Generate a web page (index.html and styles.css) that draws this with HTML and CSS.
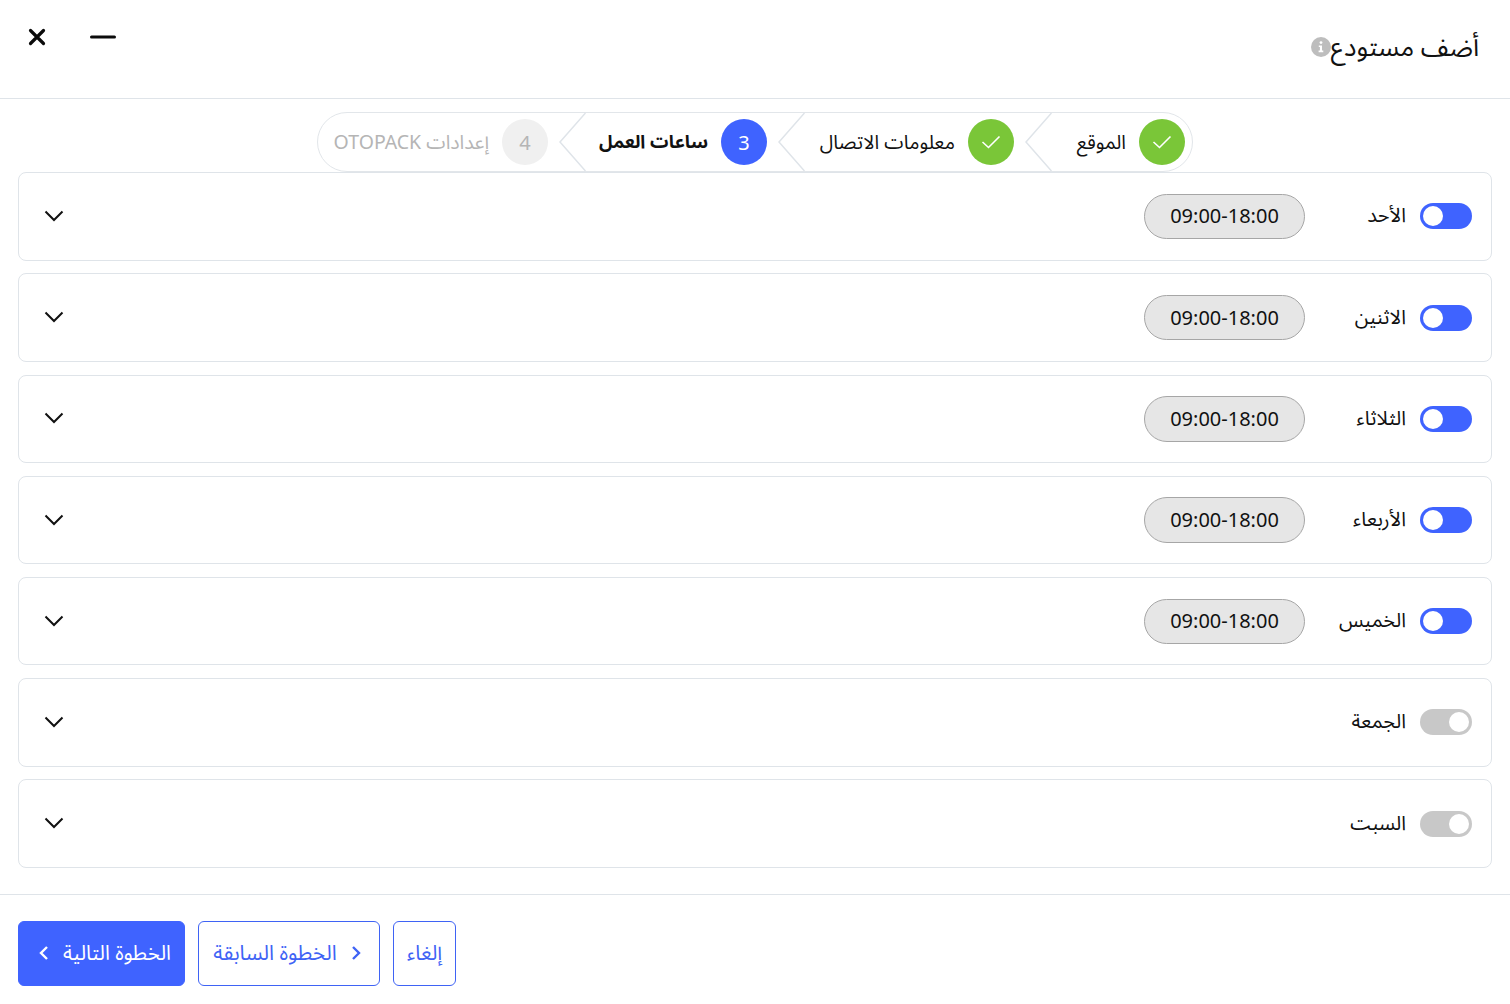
FILE: index.html
```html
<!DOCTYPE html>
<html lang="ar" dir="rtl">
<head>
<meta charset="utf-8">
<title>أضف مستودع</title>
<link rel="stylesheet" href="styles.css">
</head>
<body>
<div class="page">
  <header class="header">
    <h1 class="title"><span>أضف مستودع</span>
      <svg class="info" viewBox="0 0 20 20" width="20" height="20"><circle cx="10" cy="10" r="10" fill="#bdbdbd"/><circle cx="10" cy="5.6" r="1.4" fill="#fff"/><path d="M7.8 8.4h3.2v5.2h1.3v1.6H7.6v-1.6h1.3v-3.6H7.8z" fill="#fff"/></svg>
    </h1>
    <div class="window-actions">
      <svg class="min-icon" viewBox="0 0 26 4" width="26" height="4"><path d="M1.5 2h23" stroke="#0b0b0b" stroke-width="3" stroke-linecap="round"/></svg>
      <svg class="close-icon" viewBox="0 0 18 18" width="18" height="18"><path d="M2.5 2.5l13 13M15.5 2.5l-13 13" stroke="#0b0b0b" stroke-width="3.2" stroke-linecap="round"/></svg>
    </div>
  </header>

  <nav class="stepper-wrap">
    <div class="stepper">
      <div class="step step-1"><span class="dot dot-done"><svg viewBox="0 0 20 14" width="20" height="14"><path d="M1.5 7l6 5.5L18.5 1.5" fill="none" stroke="#fff" stroke-width="1.6"/></svg></span><span class="step-label">الموقع</span></div>
      <svg class="sep" viewBox="0 0 27 60" width="27" height="60"><path d="M26.5 1L1 30l25.5 29" fill="none" stroke="#dfe4e9" stroke-width="1.5"/></svg>
      <div class="step step-2"><span class="dot dot-done"><svg viewBox="0 0 20 14" width="20" height="14"><path d="M1.5 7l6 5.5L18.5 1.5" fill="none" stroke="#fff" stroke-width="1.6"/></svg></span><span class="step-label">معلومات الاتصال</span></div>
      <svg class="sep" viewBox="0 0 27 60" width="27" height="60"><path d="M26.5 1L1 30l25.5 29" fill="none" stroke="#dfe4e9" stroke-width="1.5"/></svg>
      <div class="step step-3"><span class="dot dot-active">3</span><span class="step-label step-label-active">ساعات العمل</span></div>
      <svg class="sep" viewBox="0 0 27 60" width="27" height="60"><path d="M26.5 1L1 30l25.5 29" fill="none" stroke="#dfe4e9" stroke-width="1.5"/></svg>
      <div class="step step-4"><span class="dot dot-todo">4</span><span class="step-label step-label-todo">إعدادات OTOPACK</span></div>
    </div>
  </nav>

  <main class="days">
    <section class="day"><span class="toggle"><i class="knob"></i></span><span class="day-name">الأحد</span><span class="hours">09:00-18:00</span><svg class="chev" viewBox="0 0 20 12" width="20" height="12"><path d="M1.5 1.5L10 10l8.5-8.5" fill="none" stroke="#111" stroke-width="2"/></svg></section>
    <section class="day"><span class="toggle"><i class="knob"></i></span><span class="day-name">الاثنين</span><span class="hours">09:00-18:00</span><svg class="chev" viewBox="0 0 20 12" width="20" height="12"><path d="M1.5 1.5L10 10l8.5-8.5" fill="none" stroke="#111" stroke-width="2"/></svg></section>
    <section class="day"><span class="toggle"><i class="knob"></i></span><span class="day-name">الثلاثاء</span><span class="hours">09:00-18:00</span><svg class="chev" viewBox="0 0 20 12" width="20" height="12"><path d="M1.5 1.5L10 10l8.5-8.5" fill="none" stroke="#111" stroke-width="2"/></svg></section>
    <section class="day"><span class="toggle"><i class="knob"></i></span><span class="day-name">الأربعاء</span><span class="hours">09:00-18:00</span><svg class="chev" viewBox="0 0 20 12" width="20" height="12"><path d="M1.5 1.5L10 10l8.5-8.5" fill="none" stroke="#111" stroke-width="2"/></svg></section>
    <section class="day"><span class="toggle"><i class="knob"></i></span><span class="day-name">الخميس</span><span class="hours">09:00-18:00</span><svg class="chev" viewBox="0 0 20 12" width="20" height="12"><path d="M1.5 1.5L10 10l8.5-8.5" fill="none" stroke="#111" stroke-width="2"/></svg></section>
    <section class="day"><span class="toggle toggle-off"><i class="knob"></i></span><span class="day-name">الجمعة</span><svg class="chev" viewBox="0 0 20 12" width="20" height="12"><path d="M1.5 1.5L10 10l8.5-8.5" fill="none" stroke="#111" stroke-width="2"/></svg></section>
    <section class="day"><span class="toggle toggle-off"><i class="knob"></i></span><span class="day-name">السبت</span><svg class="chev" viewBox="0 0 20 12" width="20" height="12"><path d="M1.5 1.5L10 10l8.5-8.5" fill="none" stroke="#111" stroke-width="2"/></svg></section>
  </main>

  <footer class="footer">
    <button class="btn btn-outline btn-cancel">إلغاء</button>
    <button class="btn btn-outline btn-prev"><svg viewBox="0 0 10 16" width="10" height="16"><path d="M2 2l6 6-6 6" fill="none" stroke="#3f63f5" stroke-width="2.4"/></svg><span>الخطوة السابقة</span></button>
    <button class="btn btn-primary btn-next"><span>الخطوة التالية</span><svg viewBox="0 0 10 16" width="10" height="16"><path d="M8 2L2 8l6 6" fill="none" stroke="#fff" stroke-width="2.4"/></svg></button>
  </footer>
</div>
</body>
</html>
```

FILE: styles.css
```css
* { box-sizing: border-box; }
html, body { margin: 0; padding: 0; background: #fff; }
body { font-family: "Noto Sans Arabic", "Noto Sans", "DejaVu Sans", sans-serif; color: #111; }
.page { width: 1510px; height: 1004px; display: flex; flex-direction: column; overflow: hidden; }

.header { height: 99px; flex: none; display: flex; justify-content: space-between; padding: 27px 31px 0 28px; border-bottom: 1px solid #dfe4e9; }
.title { margin: 0; display: flex; align-items: center; height: 42px; font-size: 26px; font-weight: 400; line-height: 42px; }
.info { margin-top: -2px; }
.window-actions { display: flex; align-items: flex-start; gap: 44px; padding-top: 1px; }
.min-icon { margin-top: 7px; }

.stepper-wrap { flex: none; display: flex; justify-content: center; padding-top: 13px; height: 73px; }
.stepper { width: 876px; height: 60px; border: 1px solid #e2e6ea; border-radius: 30px; display: flex; align-items: center; padding: 0 7px; }
.step { flex: none; display: flex; align-items: center; gap: 13px; height: 46px; }
.step-1 { width: 133px; }
.step-2 { width: 209px; margin-right: 11px; }
.step-3 { width: 181px; margin-right: 11px; }
.step-4 { width: 216px; margin-right: 11px; }
.sep { flex: none; margin-top: -1px; }
.dot { flex: none; width: 46px; height: 46px; border-radius: 50%; display: flex; align-items: center; justify-content: center; font-size: 20px; font-family: "Noto Sans", sans-serif; }
.dot-done { background: #7ac638; }
.dot-active { background: #3f63ff; color: #fff; }
.dot-todo { background: #f0f0f0; color: #b5b5b5; }
.step-label { font-size: 19.5px; white-space: nowrap; }
.step-label-active { font-weight: 700; font-size: 18.3px; }
.step-label-todo { color: #b5b5b5; }

.days { flex: none; display: flex; flex-direction: column; gap: 12.8px; padding: 0.3px 18px 0; }
.day { height: 88.4px; border: 1px solid #dfe4e9; border-radius: 8px; display: flex; align-items: center; padding: 0 19px 0 25px; }
.toggle { flex: none; width: 52px; height: 26px; border-radius: 13px; background: #3f63ff; display: flex; align-items: center; justify-content: flex-end; padding: 0 3px; }
.toggle-off { background: #c8c8c8; justify-content: flex-start; }
.knob { width: 20px; height: 20px; border-radius: 50%; background: #fff; }
.day-name { flex: none; width: 115px; padding-right: 14px; font-size: 20px; white-space: nowrap; }
.hours { flex: none; width: 161px; height: 45.4px; border: 1px solid #a6a6a6; border-radius: 23px; background: #e6e6e6; display: flex; align-items: center; justify-content: center; font-size: 20px; font-family: "Noto Sans", sans-serif; padding-bottom: 1px; }
.chev { margin-right: auto; margin-top: -1px; }

.footer { flex: none; margin-top: 26px; border-top: 1px solid #dfe4e9; padding: 26px 18px 0; display: flex; justify-content: flex-end; gap: 13px; }
.btn { height: 65px; border-radius: 6px; font-family: inherit; font-size: 20.5px; display: flex; align-items: center; justify-content: center; gap: 14px; padding: 0; cursor: pointer; }
.btn-outline { background: #fff; border: 1px solid #3f63f5; color: #3f63f5; }
.btn-primary { background: #3f63ff; border: 1px solid #3f63ff; color: #fff; }
.btn-cancel { width: 63px; }
.btn-prev { width: 182px; padding-right: 4px; font-size: 21px; }
.btn-next { width: 167px; padding-left: 7px; }
```
